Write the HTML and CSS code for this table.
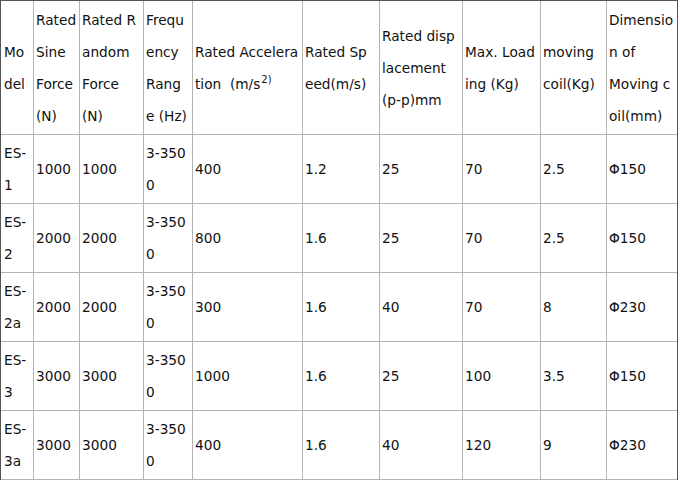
FILE: index.html
```html
<!DOCTYPE html>
<html lang="en">
<head>
<meta charset="utf-8">
<title>Vibration shaker specifications</title>
<link rel="stylesheet" href="styles.css">
</head>
<body>
<table class="spec">
  <thead>
    <tr>
      <td>Model</td>
      <td>Rated Sine Force (N)</td>
      <td>Rated Random Force (N)</td>
      <td>Frequency Range (Hz)</td>
      <td>Rated Accelera<wbr>tion&nbsp; (m/s<sup>2)</sup></td>
      <td>Rated Speed(m/s)</td>
      <td>Rated displacement (p-p)mm</td>
      <td>Max. Loading (Kg)</td>
      <td>moving coil(Kg)</td>
      <td>Dimension of<br>Moving coil(mm)</td>
    </tr>
  </thead>
  <tbody>
    <tr><td>ES-1</td><td>1000</td><td>1000</td><td>3-3500</td><td>400</td><td>1.2</td><td>25</td><td>70</td><td>2.5</td><td>Φ150</td></tr>
    <tr><td>ES-2</td><td>2000</td><td>2000</td><td>3-3500</td><td>800</td><td>1.6</td><td>25</td><td>70</td><td>2.5</td><td>Φ150</td></tr>
    <tr><td>ES-2a</td><td>2000</td><td>2000</td><td>3-3500</td><td>300</td><td>1.6</td><td>40</td><td>70</td><td>8</td><td>Φ230</td></tr>
    <tr><td>ES-3</td><td>3000</td><td>3000</td><td>3-3500</td><td>1000</td><td>1.6</td><td>25</td><td>100</td><td>3.5</td><td>Φ150</td></tr>
    <tr><td>ES-3a</td><td>3000</td><td>3000</td><td>3-3500</td><td>400</td><td>1.6</td><td>40</td><td>120</td><td>9</td><td>Φ230</td></tr>
  </tbody>
</table>
</body>
</html>
```

FILE: styles.css
```css
html, body {
  margin: 0;
  padding: 0;
  background: #ffffff;
  overflow: hidden;
}

.spec {
  table-layout: fixed;
  border-collapse: separate;
  border-spacing: 0;
  width: 678px;
  border-top: 1px solid #555555;
  border-left: 1px solid #555555;
  border-right: 1px solid #555555;
  font-family: "DejaVu Sans", Verdana, sans-serif;
  font-size: 13.7px;
  line-height: 32px;
  color: #111111;
}

.spec td {
  box-sizing: border-box;
  padding: 2px 2px 2px 2px;
  border-right: 1px solid #b4b4b4;
  border-bottom: 1px solid #b4b4b4;
  vertical-align: middle;
  text-align: left;
  word-break: break-all;
}

.spec thead td {
  padding-top: 3px;
}

.spec td:last-child {
  border-right: none;
}

.spec sup {
  font-size: 10px;
  line-height: 0;
  vertical-align: super;
  margin-left: 1px;
}

/* column widths (border-box, including the 1px right rule) */
.spec tr > td:nth-child(1)  { width: 33px;  padding-left: 3px; }
.spec tr > td:nth-child(2)  { width: 46px; }
.spec tr > td:nth-child(3)  { width: 64px;  padding-right: 3px; }
.spec tr > td:nth-child(4)  { width: 49px;  padding-right: 4px; }
.spec tr > td:nth-child(5)  { width: 110px; }
.spec tr > td:nth-child(6)  { width: 77px;  padding-right: 8px; }
.spec tr > td:nth-child(7)  { width: 83px;  padding-right: 5px; }
.spec tr > td:nth-child(8)  { width: 78px;  padding-right: 3px; }
.spec tr > td:nth-child(9)  { width: 66px; }
.spec tr > td:nth-child(10) { width: 70px; }
```
